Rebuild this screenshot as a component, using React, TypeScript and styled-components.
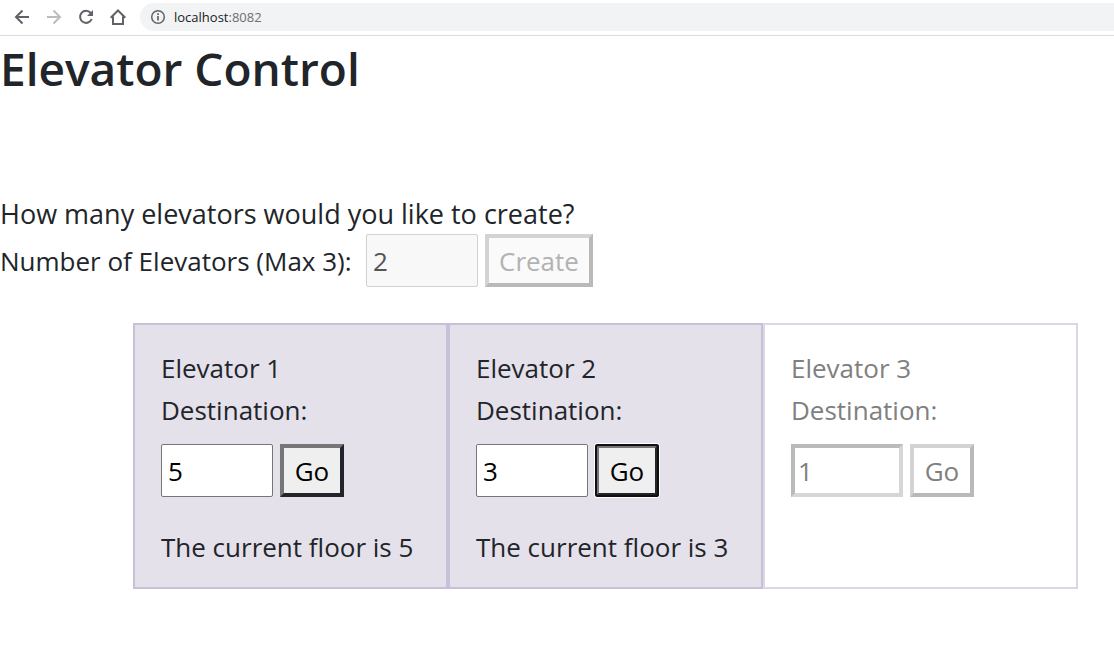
import React, { useState } from 'react';
import styled, { createGlobalStyle, css } from 'styled-components';

const GlobalStyle = createGlobalStyle`
  *, *::before, *::after { box-sizing: border-box; }
  body {
    margin: 0;
    background: #fff;
    color: #212529;
    font-family: 'Segoe UI', 'Open Sans', sans-serif;
    font-size: 26px;
    line-height: 42px;
  }
`;

const BrowserBar = styled.nav`
  display: flex;
  align-items: center;
  height: 36px;
  padding: 0 0 2px 14px;
  border-bottom: 1px solid #dadce0;
  gap: 16px;
`;

const NavButton = styled.button`
  display: flex;
  width: 16px;
  height: 16px;
  padding: 0;
  border: 0;
  background: none;
  color: #5f6368;
  &:disabled { color: #babcbe; }
`;

const AddressBar = styled.div`
  display: flex;
  flex: 1;
  align-items: center;
  gap: 8px;
  height: 28px;
  margin-left: -2px;
  padding-left: 10px;
  border-radius: 14px 0 0 14px;
  background: #f1f3f4;
  color: #5f6368;
`;

const Address = styled.span`
  color: #6b6f73;
  font-size: 13px;
  line-height: 20px;
`;

const Host = styled.span`
  color: #202124;
`;

const Title = styled.h1`
  margin: 0 0 94px;
  font-size: 46px;
  font-weight: 600;
  line-height: 64px;
`;

const Prompt = styled.p`
  margin: 0;
  font-size: 27px;
  line-height: 40px;
`;

const Row = styled.div`
  display: flex;
  align-items: center;
  gap: 7px;
`;

const CountLabel = styled.label`
  min-width: 359px;
`;

const Field = styled.input`
  width: 112px;
  height: 53px;
  padding: 0 6px;
  border: 1px solid #767676;
  border-radius: 2px;
  background: #fff;
  color: #000;
  font: inherit;
  outline: none;
  &:disabled {
    border-color: #d1d1d1;
    background: #f8f8f8;
    color: #545454;
  }
`;

const InactiveField = styled(Field)`
  &:disabled {
    padding: 0 3px;
    border: 4px solid;
    border-color: #bababa #d6d6d6 #d6d6d6 #bababa;
    border-radius: 0;
    background: #fff;
    color: #808080;
  }
`;

const ActionButton = styled.button<{ $focused?: boolean }>`
  min-width: 64px;
  height: 53px;
  padding: 0 10px;
  border: 4px solid;
  border-color: #767676 #212529 #212529 #767676;
  background: #efefef;
  color: #000;
  font: inherit;
  outline: none;
  ${({ $focused }) => $focused && css`
    border-radius: 3px;
    outline: 2px solid #101010;
    outline-offset: -2px;
    box-shadow: 0 0 0 1px #fff;
  `}
  &:disabled {
    border-color: #d3d3d3 #b9b9b9 #b9b9b9 #d3d3d3;
    background: #fafafa;
    color: #b2b2b2;
  }
`;

const InactiveButton = styled(ActionButton)`
  &:disabled {
    background: #fff;
    color: #808080;
  }
`;

const Shafts = styled.section`
  display: grid;
  grid-template-columns: repeat(3, minmax(0, 1fr));
  margin: 36px 36px 0 133px;
`;

const Shaft = styled.article<{ $inactive?: boolean }>`
  min-height: 266px;
  padding: 22px 26px 19px;
  border: 2px solid ${p => (p.$inactive ? '#dcd7e7' : '#c8c0d8')};
  background: ${p => (p.$inactive ? '#fff' : '#e5e1eb')};
  color: ${p => (p.$inactive ? '#808080' : 'inherit')};
`;

const Name = styled.div``;

const DestinationLabel = styled.label`
  display: block;
  margin-bottom: 13px;
`;

const Status = styled.p`
  margin: 29px 0 0;
`;

const BackIcon = () => (
  <svg width="16" height="16" viewBox="0 0 16 16" fill="none" stroke="currentColor" strokeWidth="2">
    <path d="M15 8H2.5M8.5 1.5L2 8l6.500 6.500" />
  </svg>
);

const ForwardIcon = () => (
  <svg width="16" height="16" viewBox="0 0 16 16" fill="none" stroke="currentColor" strokeWidth="2">
    <path d="M1 8h12.500M7.500 1.500L14 8l-6.500 6.500" />
  </svg>
);

const ReloadIcon = () => (
  <svg width="16" height="16" viewBox="0 0 16 16" fill="none">
    <path d="M12.700 4A6 6 0 1 0 13.700 10" stroke="currentColor" strokeWidth="2" />
    <path d="M15 1v6H9z" fill="currentColor" />
  </svg>
);

const HomeIcon = () => (
  <svg width="16" height="16" viewBox="0 0 16 16" fill="none" stroke="currentColor" strokeWidth="2">
    <path d="M.7 8.700L8 1.500l7.300 7.200M3 7.500V15h10V7.500" />
  </svg>
);

const InfoIcon = () => (
  <svg width="16" height="16" viewBox="0 0 16 16" fill="none" stroke="currentColor">
    <circle cx="8" cy="8" r="6.300" strokeWidth="1.500" />
    <path d="M8 7v4.500M8 4.300v1.700" strokeWidth="1.700" />
  </svg>
);

interface ElevatorProps {
  id: number;
  floor: number;
  inactive?: boolean;
  focused?: boolean;
  onGo: () => void;
}

function Elevator({ id, floor, inactive, focused, onGo }: ElevatorProps) {
  const [destination, setDestination] = useState(String(floor));
  const [current, setCurrent] = useState(String(floor));
  const Input = inactive ? InactiveField : Field;
  const Button = inactive ? InactiveButton : ActionButton;
  return (
    <Shaft $inactive={inactive}>
      <Name>Elevator {id}</Name>
      <DestinationLabel htmlFor={`destination-${id}`}>Destination:</DestinationLabel>
      <Row>
        <Input
          id={`destination-${id}`}
          inputMode="numeric"
          value={destination}
          disabled={inactive}
          onChange={e => setDestination(e.target.value)}
        />
        <Button
          type="button"
          disabled={inactive}
          $focused={focused}
          onClick={() => {
            setCurrent(destination);
            onGo();
          }}
        >
          Go
        </Button>
      </Row>
      {!inactive && <Status>The current floor is {current}</Status>}
    </Shaft>
  );
}

const elevators = [
  { id: 1, floor: 5 },
  { id: 2, floor: 3 },
  { id: 3, floor: 1 },
];
const createdCount = 2;

export default function App() {
  const [lastUsed, setLastUsed] = useState(2);
  return (
    <>
      <GlobalStyle />
      <BrowserBar>
        <NavButton type="button" aria-label="Back"><BackIcon /></NavButton>
        <NavButton type="button" aria-label="Forward" disabled><ForwardIcon /></NavButton>
        <NavButton type="button" aria-label="Reload"><ReloadIcon /></NavButton>
        <NavButton type="button" aria-label="Home"><HomeIcon /></NavButton>
        <AddressBar>
          <InfoIcon />
          <Address><Host>localhost</Host>:8082</Address>
        </AddressBar>
      </BrowserBar>
      <main>
        <Title>Elevator Control</Title>
        <Prompt>How many elevators would you like to create?</Prompt>
        <Row>
          <CountLabel htmlFor="count">Number of Elevators (Max 3):</CountLabel>
          <Field id="count" value={createdCount} disabled readOnly />
          <ActionButton type="button" disabled>Create</ActionButton>
        </Row>
        <Shafts>
          {elevators.map(({ id, floor }) => (
            <Elevator
              key={id}
              id={id}
              floor={floor}
              inactive={id > createdCount}
              focused={id === lastUsed}
              onGo={() => setLastUsed(id)}
            />
          ))}
        </Shafts>
      </main>
    </>
  );
}
